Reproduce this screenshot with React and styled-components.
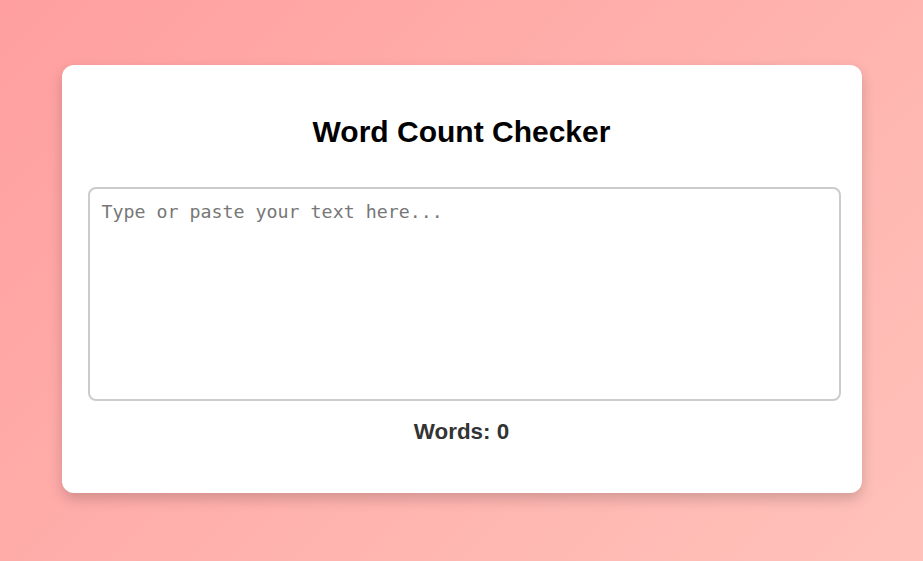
import React, { useState } from 'react'
import styled, { createGlobalStyle } from 'styled-components'

const GlobalStyle = createGlobalStyle`
  html, body {
    margin: 0;
    padding: 0;
  }
  body {
    font-family: "Liberation Sans", Arial, sans-serif;
    background: linear-gradient(135deg, #ff9f9f 0%, #ffc2ba 100%);
    min-height: 100vh;
  }
`

const Page = styled.div`
  min-height: 100vh;
  display: flex;
  align-items: center;
  justify-content: center;
  box-sizing: border-box;
  padding-bottom: 3px;
`

const Card = styled.div`
  width: 800px;
  box-sizing: border-box;
  background: #fff;
  border-radius: 12px;
  padding: 50px 26px 47px;
  box-shadow: 0 6px 14px rgba(0, 0, 0, 0.18);
  display: flex;
  flex-direction: column;
  align-items: stretch;
`

const Title = styled.h1`
  margin: 0 0 38px;
  font-size: 30px;
  line-height: 34px;
  text-align: center;
  color: #000;
`

const TextBox = styled.textarea`
  width: calc(100% + 5px);
  height: 214px;
  box-sizing: border-box;
  border: 2px solid #ccc;
  border-radius: 8px;
  padding: 12px 12px;
  font-family: "DejaVu Sans Mono", "Liberation Mono", monospace;
  font-size: 18.3px;
  resize: none;
  outline: none;
  color: #333;
  &::placeholder {
    color: #777;
  }
`

const Count = styled.div`
  margin-top: 17px;
  font-size: 22.4px;
  line-height: 28px;
  font-weight: bold;
  color: #333;
  text-align: center;
`

export default function App() {
  const [text, setText] = useState('')
  const words = text.trim() ? text.trim().split(/\s+/).length : 0
  return (
    <>
      <GlobalStyle />
      <Page>
        <Card>
          <Title>Word Count Checker</Title>
          <TextBox
            placeholder="Type or paste your text here..."
            value={text}
            onChange={(e) => setText(e.target.value)}
          />
          <Count>Words: {words}</Count>
        </Card>
      </Page>
    </>
  )
}
